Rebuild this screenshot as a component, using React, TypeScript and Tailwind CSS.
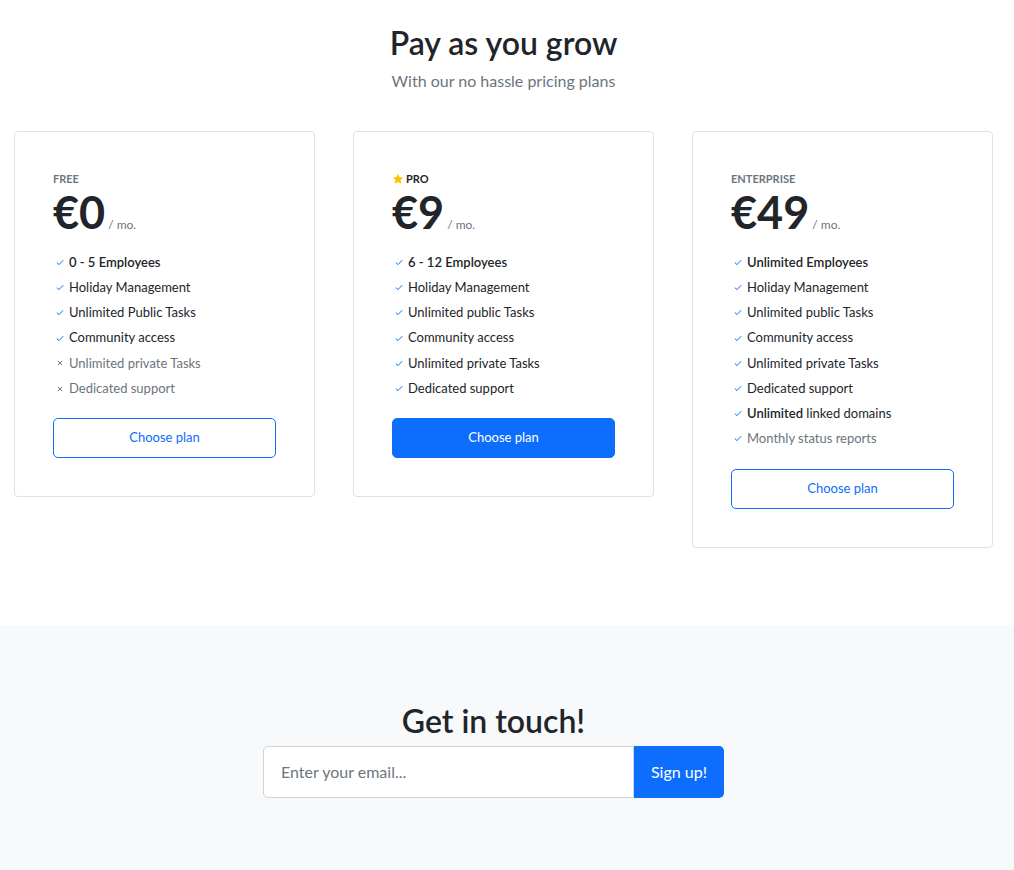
import React from "react";

type Feature = { text: React.ReactNode; ok?: boolean; muted?: boolean; bold?: boolean };

type Plan = {
  name: string;
  price: string;
  star?: boolean;
  primary?: boolean;
  features: Feature[];
};

const plans: Plan[] = [
  {
    name: "FREE",
    price: "€0",
    features: [
      { text: "0 - 5 Employees", ok: true, bold: true },
      { text: "Holiday Management", ok: true },
      { text: "Unlimited Public Tasks", ok: true },
      { text: "Community access", ok: true },
      { text: "Unlimited private Tasks", ok: false, muted: true },
      { text: "Dedicated support", ok: false, muted: true },
    ],
  },
  {
    name: "PRO",
    price: "€9",
    star: true,
    primary: true,
    features: [
      { text: "6 - 12 Employees", ok: true, bold: true },
      { text: "Holiday Management", ok: true },
      { text: "Unlimited public Tasks", ok: true },
      { text: "Community access", ok: true },
      { text: "Unlimited private Tasks", ok: true },
      { text: "Dedicated support", ok: true },
    ],
  },
  {
    name: "ENTERPRISE",
    price: "€49",
    features: [
      { text: "Unlimited Employees", ok: true, bold: true },
      { text: "Holiday Management", ok: true },
      { text: "Unlimited public Tasks", ok: true },
      { text: "Community access", ok: true },
      { text: "Unlimited private Tasks", ok: true },
      { text: "Dedicated support", ok: true },
      {
        text: (
          <>
            <span className="font-semibold">Unlimited</span> linked domains
          </>
        ),
        ok: true,
      },
      { text: "Monthly status reports", ok: true, muted: true },
    ],
  },
];

function Check() {
  return (
    <svg width="8" height="7" viewBox="0 0 8 7" className="ml-[3px] shrink-0">
      <path d="M0.8 3.6 L3 5.6 L7.2 1.2" fill="none" stroke="#0d6efd" strokeWidth="1" />
    </svg>
  );
}

function Cross() {
  return (
    <svg width="8" height="8" viewBox="0 0 8 8" className="ml-[3px] shrink-0">
      <path d="M1.8 1.8 L6.2 6.2 M6.2 1.8 L1.8 6.2" fill="none" stroke="#6c757d" strokeWidth="1" />
    </svg>
  );
}

function Star() {
  return (
    <svg width="12" height="12" viewBox="0 0 24 24" className="mr-[2px]">
      <path
        d="M12 1.5l3.2 6.9 7.3.8-5.5 5 1.6 7.4L12 17.8l-6.6 3.8L7 14.2l-5.5-5 7.3-.8z"
        fill="#ffc107"
      />
    </svg>
  );
}

function PlanCard({ plan }: { plan: Plan }) {
  return (
    <div className="rounded border border-[#dee2e6] bg-white px-[38px] pt-[39px] pb-[38px]">
      <div className="flex h-4 items-center text-[11px] font-bold leading-4 text-[#6c757d]">
        {plan.star && <Star />}
        <span className={plan.star ? "text-[#212529]" : ""}>{plan.name}</span>
      </div>
      <div className="flex items-baseline">
        <span className="text-[45px] font-bold leading-[50px] text-[#212529]">{plan.price}</span>
        <span className="ml-[3px] text-[12px] text-[#6c757d]">/ mo.</span>
      </div>
      <ul className="mt-[13px]">
        {plan.features.map((f, i) => (
          <li key={i} className="flex h-[25.2px] items-center gap-[5px] text-[13px]">
            {f.ok ? <Check /> : <Cross />}
            <span
              className={
                (f.muted ? "text-[#6c757d]" : "text-[#212529]") + (f.bold ? " font-semibold" : "")
              }
            >
              {f.text}
            </span>
          </li>
        ))}
      </ul>
      <button
        className={
          "mt-[17px] h-10 w-full rounded-[5px] border border-[#0d6efd] text-[13px] " +
          (plan.primary ? "bg-[#0d6efd] text-white" : "bg-white text-[#0d6efd]")
        }
      >
        Choose plan
      </button>
    </div>
  );
}

export default function App() {
  return (
    <div className="min-h-screen bg-white text-[#212529]" style={{ fontFamily: "Lato, 'Open Sans', sans-serif" }}>
      <section className="w-[1007px] px-[14px] pt-[24px]">
        <h1 className="text-center text-[32px] font-semibold leading-[38px]">Pay as you grow</h1>
        <p className="mt-[7px] text-center text-[16px] leading-6 text-[#6c757d]">
          With our no hassle pricing plans
        </p>
        <div className="mt-[38px] grid grid-cols-3 items-start gap-[38px]">
          {plans.map((p) => (
            <PlanCard key={p.name} plan={p} />
          ))}
        </div>
      </section>
      <section className="mt-[77px] h-[245px] bg-[#f8f9fa]">
        <div className="flex w-[987px] flex-col items-center pt-[77px]">
          <h2 className="text-[32px] font-semibold leading-[38px]">Get in touch!</h2>
          <div className="mt-[6px] flex h-[52px] w-[461px]">
            <input
              placeholder="Enter your email..."
              className="h-full flex-1 rounded-l-[5px] border border-[#ced4da] bg-white px-[17px] text-[16px] text-[#212529] outline-none placeholder:text-[#6c757d]"
            />
            <button className="h-full w-[90px] rounded-r-[5px] bg-[#0d6efd] text-[16px] text-white">
              Sign up!
            </button>
          </div>
        </div>
      </section>
    </div>
  );
}
